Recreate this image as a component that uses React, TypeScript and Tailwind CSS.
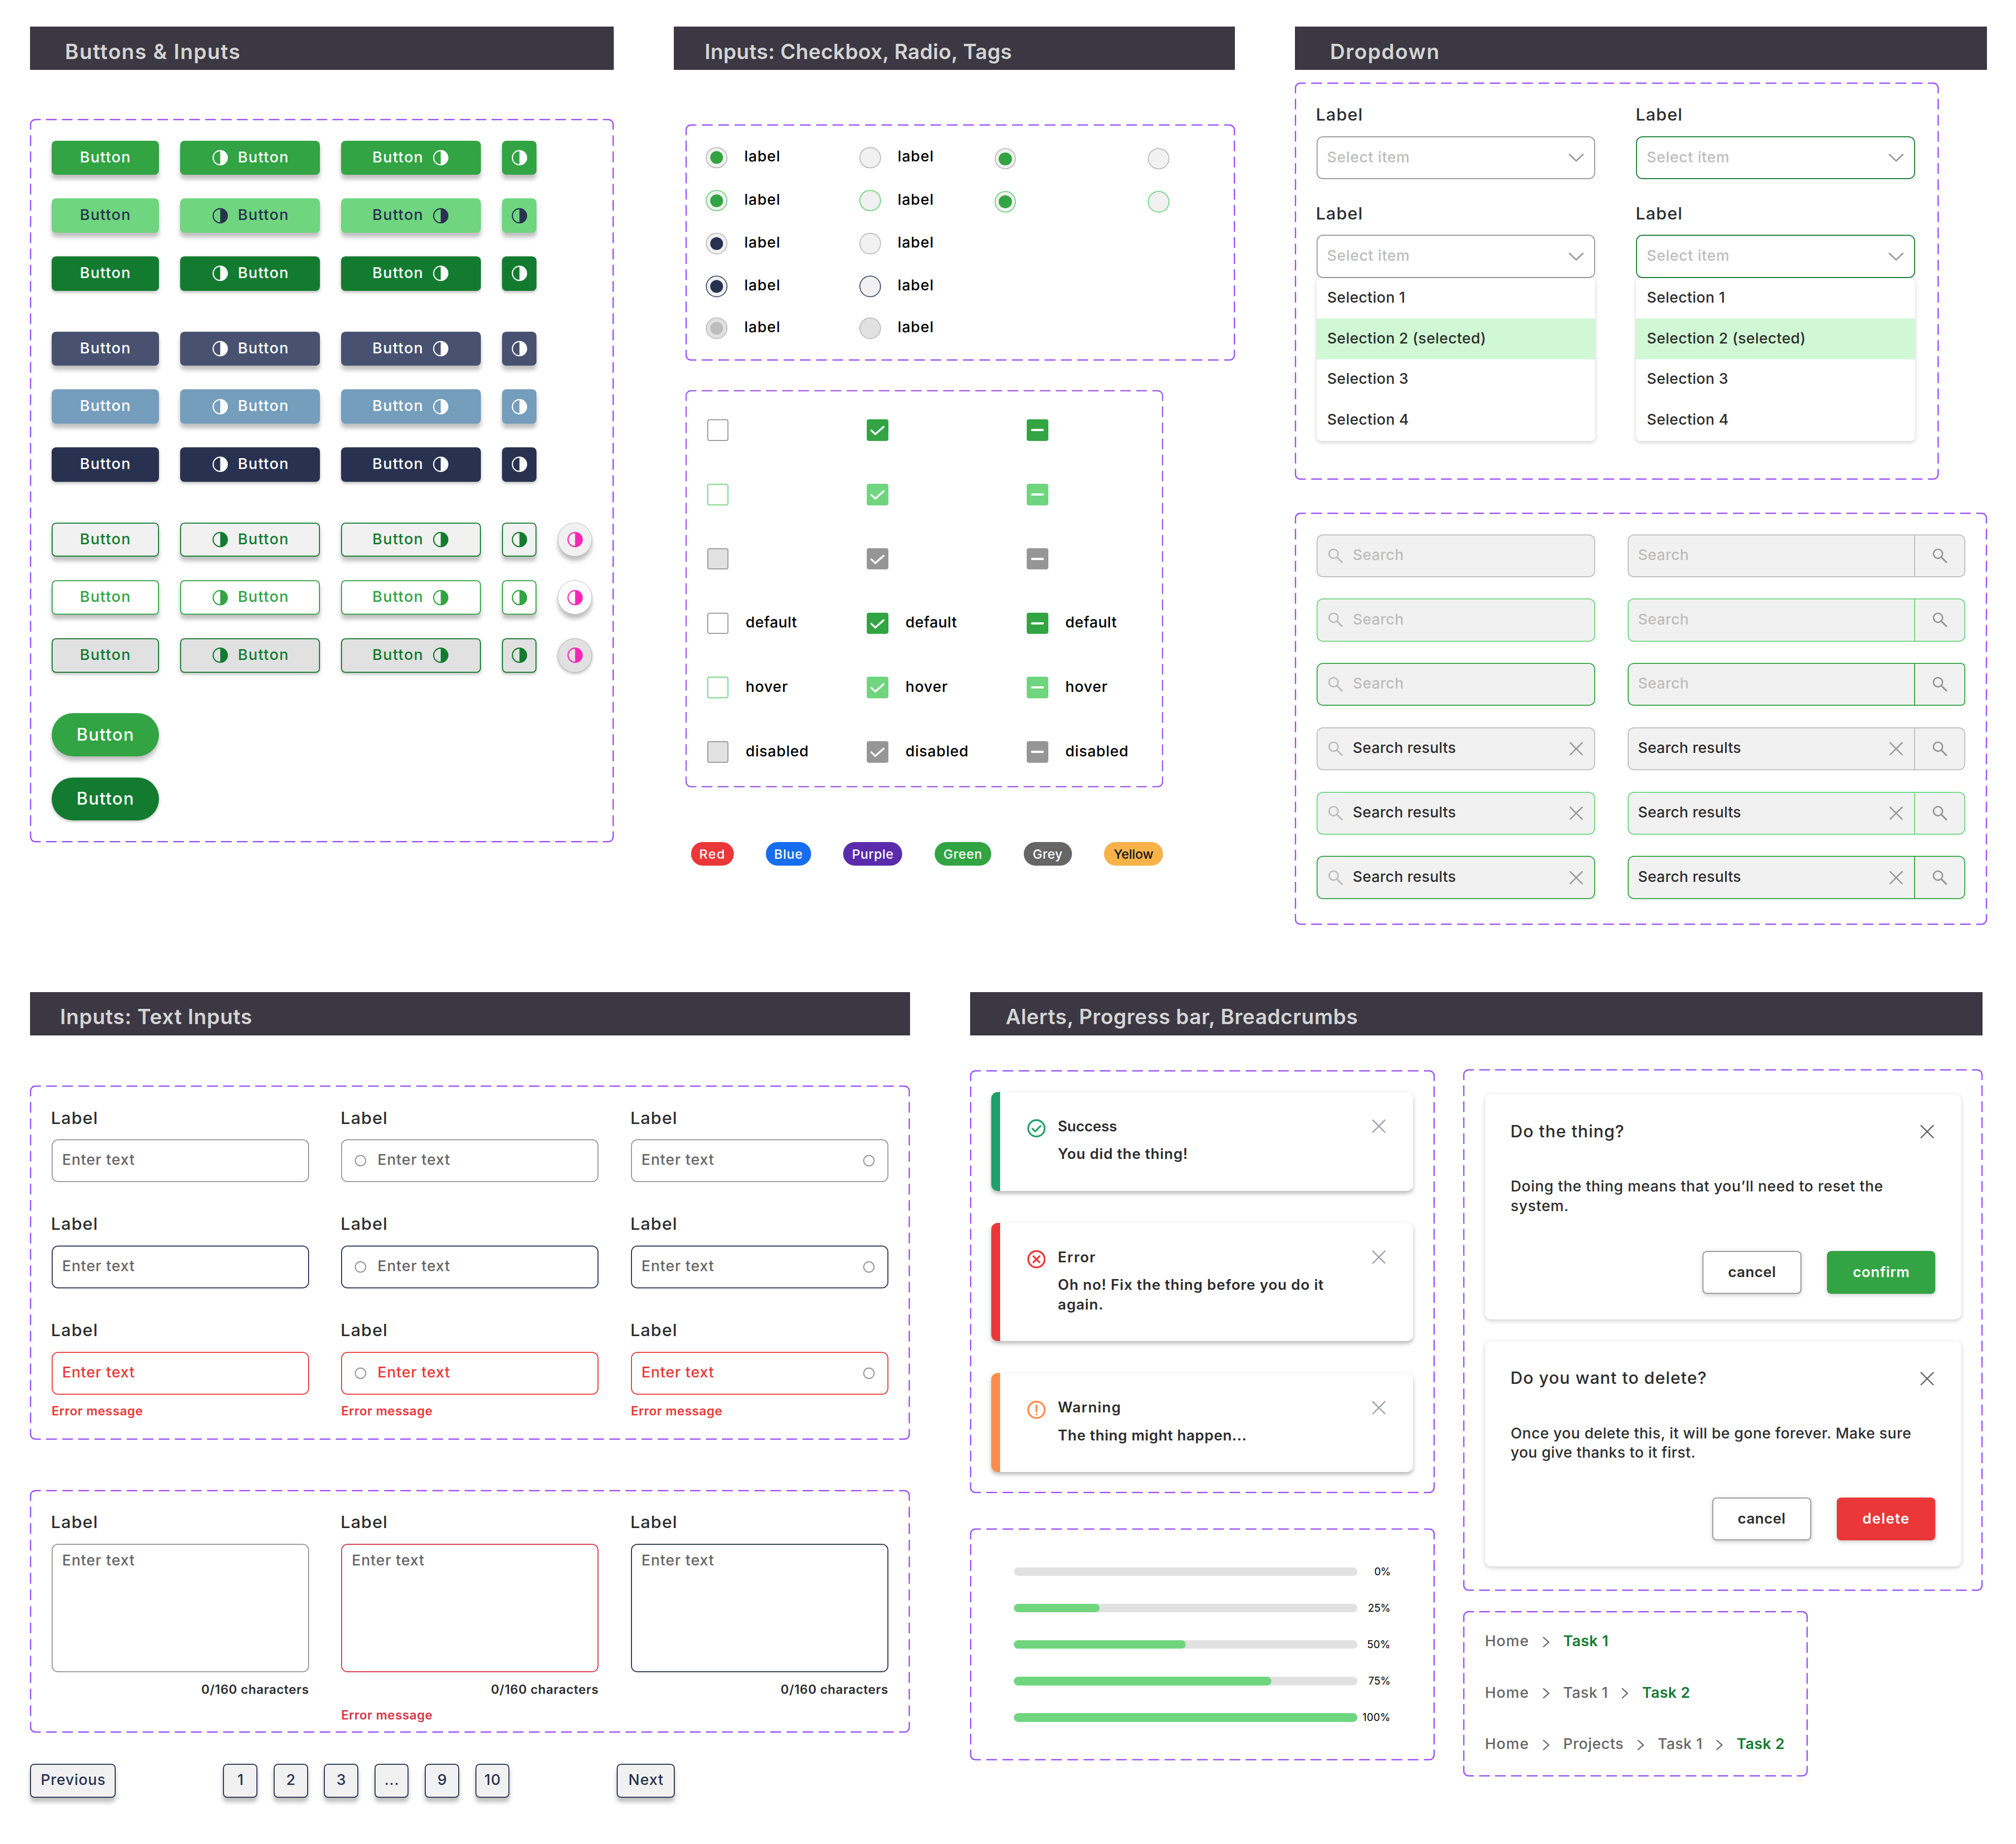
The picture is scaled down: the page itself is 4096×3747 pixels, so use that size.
import React from "react";

type Kids = { children?: React.ReactNode };

/* ---------- dashed component frame ---------- */

const R = 4.5;
const K = 0.5 + R * (1 - Math.SQRT1_2);
const CORNER = (R * Math.PI) / 4 + 5;

function dash(side: number) {
  const length = side - 10 + (R * Math.PI) / 2;
  const inner = length - 2 * CORNER;
  const n = Math.round((inner - 5) / 15);
  const gap = (inner - 10 * n) / (n + 1);
  return { strokeDasharray: `10 ${gap}`, strokeDashoffset: 10 - CORNER };
}

function Frame({ w, h, size, className = "", stroke = "#9747ff", children }: Kids & { w: number; h: number; size: string; className?: string; stroke?: string }) {
  const r = w - K;
  const b = h - K;
  const arc = (x: number, y: number) => `A${R} ${R} 0 0 1 ${x} ${y}`;
  return (
    <div className={`relative shrink-0 ${size} ${className}`}>
      <svg className="pointer-events-none absolute inset-0 overflow-visible" width={w} height={h} fill="none" stroke={stroke} strokeWidth="1.15">
        <path d={`M${K} ${K}${arc(5, 0.5)}H${w - 5}${arc(r, K)}`} {...dash(w)} />
        <path d={`M${r} ${K}${arc(w - 0.5, 5)}V${h - 5}${arc(r, b)}`} {...dash(h)} />
        <path d={`M${r} ${b}${arc(w - 5, h - 0.5)}H5${arc(K, b)}`} {...dash(w)} />
        <path d={`M${K} ${b}${arc(0.5, h - 5)}V5${arc(K, K)}`} {...dash(h)} />
      </svg>
      {children}
    </div>
  );
}

function Header({ children, className = "" }: Kids & { className?: string }) {
  return (
    <h2 className={`flex h-10 shrink-0 items-center bg-[#3b3843] pt-[6.4px] text-[19.25px] font-[580] whitespace-nowrap text-[#d4d4d4] ${className}`}>
      {children}
    </h2>
  );
}

/* ---------- icons ---------- */

const svg = "block size-4 shrink-0";

const Contrast = () => (
  <svg className={svg} viewBox="0 0 16 16">
    <circle cx="8" cy="8" r="6.6" fill="none" stroke="currentColor" strokeWidth="1.1" />
    <path d="M8 1.4a6.6 6.6 0 0 1 0 13.2z" fill="currentColor" />
  </svg>
);
const Close = ({ className = "" }: { className?: string }) => (
  <svg className={`${svg} ${className}`} viewBox="0 0 16 16" fill="none" stroke="currentColor" strokeWidth="1.25" strokeLinecap="round">
    <path d="M2.4 2.4l11.2 11.2M13.6 2.4L2.4 13.6" />
  </svg>
);
const Down = () => (
  <svg className={`${svg} text-[#969696]`} viewBox="0 0 16 16" fill="none" stroke="currentColor" strokeWidth="1.3" strokeLinecap="round" strokeLinejoin="round">
    <path d="M1.7 5L8 11L14.3 5" />
  </svg>
);
const Right = () => (
  <svg className={`${svg} text-[#666666]`} viewBox="0 0 16 16" fill="none" stroke="currentColor" strokeWidth="1.1" strokeLinecap="round" strokeLinejoin="round">
    <path d="M5.6 4.3L10.4 8.6L5.6 12.9" />
  </svg>
);
const Magnifier = ({ className = "" }: { className?: string }) => (
  <svg className={`${svg} ${className}`} viewBox="0 0 16 16" fill="none" stroke="currentColor" strokeWidth="1.35">
    <circle cx="6.2" cy="6.1" r="4.2" />
    <path d="M9.3 9.3L14 14" strokeWidth="1.5" strokeLinecap="round" />
  </svg>
);
const Ring = () => (
  <svg className={`${svg} text-[#969696]`} viewBox="0 0 16 16" fill="none" stroke="currentColor" strokeWidth="1">
    <circle cx="8" cy="8" r="4.85" />
  </svg>
);
const status = {
  success: <path d="M6.3 10.3l2.5 2.5 5-5" />,
  error: <path d="M7.2 7.2l5.6 5.6M12.8 7.2l-5.6 5.6" />,
  warning: <path d="M10 5.7v6M10 14.3v.01" />,
};

/* ---------- buttons ---------- */

const lift = "shadow-[0_4px_4px_rgba(0,0,0,0.25)]";
const press = "shadow-[0_1px_3px_rgba(0,0,0,0.28)]";

const buttonGroups: string[][] = [
  [
    `bg-[#32a443] text-white ${lift}`,
    `bg-[#6fd57f] text-[#283250] ${lift}`,
    `bg-[#137b30] text-white ${press}`,
  ],
  [
    `bg-[#485270] text-white ${lift}`,
    `bg-[#759dbc] text-white ${lift}`,
    `bg-[#283250] text-white ${press}`,
  ],
  [
    `border border-[#137b30] bg-[#f1f1f1] text-[#137b30] ${lift}`,
    `border border-[#32a443] bg-white text-[#32a443] ${lift}`,
    `border border-[#137b30] bg-[#e1e1e1] text-[#137b30] ${press}`,
  ],
];
const rounds = [`bg-[#f1f1f1] ${lift}`, `bg-white ${lift}`, `bg-[#e1e1e1] ${press}`];

const ButtonText = () => <span className="-mr-[0.7px] pb-[1.6px] text-[14px] font-[450] tracking-[0.72px]">Button</span>;
const btn = "flex h-8 items-center justify-center rounded-[4px]";

function ButtonsSection() {
  return (
    <section className="w-[544px]">
      <Header className="pl-[32.6px] tracking-[0.75px]">Buttons &amp; Inputs</Header>
      <Frame w={544} h={674} size="h-[674px] w-[544px]" className="mt-[46px] flex flex-col gap-[38px] p-5">
        {buttonGroups.map((group, g) => (
          <div key={g} className="flex flex-col gap-[22px]">
            {group.map((tone, i) => (
              <div key={i} className="flex gap-5">
                <button className={`${btn} w-[100px] ${tone}`}><ButtonText /></button>
                <button className={`${btn} w-[130px] gap-[8.5px] ${tone}`}><Contrast /><ButtonText /></button>
                <button className={`${btn} w-[130px] gap-[8.7px] ${tone}`}><ButtonText /><Contrast /></button>
                <button className={`${btn} w-8 ${tone}`}><Contrast /></button>
                {g === 2 && (
                  <button className={`flex size-8 items-center justify-center rounded-full border-[0.5px] border-[#b5b5b5] text-[#f726b4] ${rounds[i]}`}>
                    <Contrast />
                  </button>
                )}
              </div>
            ))}
          </div>
        ))}
        <div className="flex flex-col gap-5">
          {[`bg-[#32a443] ${lift}`, `bg-[#137b30] ${press}`].map((tone) => (
            <button key={tone} className={`flex h-10 w-[100px] items-center justify-center rounded-full pb-[1.3px] pl-[0.7px] text-[16px] font-[450] tracking-[0.74px] text-white ${tone}`}>
              Button
            </button>
          ))}
        </div>
      </Frame>
    </section>
  );
}

/* ---------- radios, checkboxes, tags ---------- */

function Radio({ ring, fill = "bg-[#f1f1f1]", dot, text }: { ring: string; fill?: string; dot?: string; text?: boolean }) {
  return (
    <div className="flex h-5 items-center gap-[15.7px]">
      <span className={`flex size-5 items-center justify-center rounded-full border ${ring} ${fill}`}>
        {dot && <span className={`size-3 rounded-full ${dot}`} />}
      </span>
      {text && <span className="pb-[2px] text-[13.8px] leading-5 font-[450] tracking-[0.48px]">label</span>}
    </div>
  );
}

const radioRows = [
  { ring: "border-[#bdbdbd]", dot: "bg-[#32a443]", extra: true },
  { ring: "border-[#6fd57f]", dot: "bg-[#32a443]", extra: true },
  { ring: "border-[#bdbdbd]", dot: "bg-[#283250]" },
  { ring: "border-[#485270]", dot: "bg-[#283250]" },
  { ring: "border-[#bdbdbd]", dot: "bg-[#bdbdbd]", fill: "bg-[#e1e1e1]" },
];

const boxTones = [
  { empty: "border-[#969696] bg-white", full: "bg-[#32a443]" },
  { empty: "border-[#6fd57f] bg-white", full: "bg-[#6fd57f]" },
  { empty: "border-[#969696] bg-[#e1e1e1]", full: "bg-[#969696]" },
];
const boxRows = [
  ...boxTones.map((t) => ({ ...t, text: "", track: "" })),
  { ...boxTones[0], text: "default", track: "tracking-[0.27px]" },
  { ...boxTones[1], text: "hover", track: "tracking-[0.42px]" },
  { ...boxTones[2], text: "disabled", track: "tracking-[0.38px]" },
];

function Check({ tone, kind, text, track }: { tone: string; kind: number; text: string; track: string }) {
  return (
    <div className="flex h-5 items-center gap-4">
      <span className={`size-5 rounded-[2px] ${kind === 0 ? "border" : ""} ${tone}`}>
        {kind > 0 && (
          <svg className="block size-5" viewBox="0 0 20 20" fill="none" stroke="white" strokeLinecap="round" strokeLinejoin="round">
            {kind === 1 ? <path d="M4.3 10.3L7.9 13.9L15.7 7" strokeWidth="1.7" /> : <path d="M5 10h10" strokeWidth="2" />}
          </svg>
        )}
      </span>
      <span className={`pb-[1.5px] text-[13.8px] leading-5 font-[450] ${track}`}>{text}</span>
    </div>
  );
}

const tags: [string, string][] = [
  ["Red", "w-10 bg-[#eb3738] text-white tracking-[0.8px]"],
  ["Blue", "w-[42px] bg-[#176df0] text-white tracking-[0.43px]"],
  ["Purple", "w-[55px] bg-[#5a2cab] text-white tracking-[0.28px]"],
  ["Green", "w-[53px] bg-[#32a443] text-white tracking-[0.33px]"],
  ["Grey", "w-[45px] bg-[#666666] text-white tracking-[0.2px]"],
  ["Yellow", "w-[55px] bg-[#f8b24a] text-[#10141c] tracking-[-0.08px]"],
];

function ChoicesSection() {
  return (
    <section className="w-[523px]">
      <Header className="pl-[28.8px] tracking-[0.18px]">Inputs: Checkbox, Radio, Tags</Header>
      <Frame w={512} h={220} size="h-[220px] w-[512px]" className="mt-[51px] ml-[11px] flex flex-col gap-5 pt-[21px] pl-[19px]">
        {radioRows.map(({ extra, dot, ...row }, i) => (
          <div key={i} className={i === 4 ? "-mt-px grid grid-cols-[143px_126px_143px_20px]" : "grid grid-cols-[143px_126px_143px_20px]"}>
            <Radio {...row} dot={dot} text />
            <Radio {...row} text />
            {extra && <div className="-mb-px pt-px"><Radio {...row} dot={dot} /></div>}
            {extra && <div className="-mb-px pt-px"><Radio {...row} /></div>}
          </div>
        ))}
      </Frame>
      <Frame w={445} h={370} size="h-[370px] w-[445px]" stroke="#9a57e9" className="mt-7 ml-[11px] flex flex-col gap-10 pt-[27px] pl-5">
        {boxRows.map((row, i) => (
          <div key={i} className="grid grid-cols-[149px_149px_100px]">
            <Check kind={0} tone={row.empty} text={row.text} track={row.track} />
            <Check kind={1} tone={row.full} text={row.text} track={row.track} />
            <Check kind={2} tone={row.full} text={row.text} track={row.track} />
          </div>
        ))}
      </Frame>
      <div className="mt-[51px] ml-4 flex gap-[30px]">
        {tags.map(([name, style]) => (
          <span key={name} className={`flex h-[22px] items-center justify-center rounded-full text-[12px] font-[470] ${style}`}>{name}</span>
        ))}
      </div>
    </section>
  );
}

/* ---------- dropdowns and search ---------- */

const FieldLabel = () => (
  <div className="-ml-[0.5px] h-5 text-[15.9px] leading-5 font-[450] tracking-[0.55px] text-[#2d2d2d]">Label</div>
);

function Select({ tone, open }: { tone: string; open?: boolean }) {
  return (
    <div className="w-[260px]">
      <FieldLabel />
      <div className={`mt-[10px] flex h-10 items-center justify-between rounded-[6px] border bg-white px-[9px] ${tone}`}>
        <span className="pb-px text-[13.8px] font-[450] tracking-[0.35px] text-[#bdbdbd]">Select item</span>
        <Down />
      </div>
      {open && (
        <ul className="rounded-[4px] bg-white text-[13.8px] font-[450] tracking-[0.2px] text-[#2d2d2d] shadow-[0_1px_4px_rgba(0,0,0,0.18)]">
          {["Selection 1", "Selection 2 (selected)", "Selection 3", "Selection 4"].map((item, i) => (
            <li key={item} className={`flex h-[38px] items-center pb-[1.5px] pl-[10px] ${i === 1 ? "bg-[#d0f8d5]" : ""}`}>{item}</li>
          ))}
        </ul>
      )}
    </div>
  );
}

const searchRows = [
  { tone: "border-[#bdbdbd]", full: false },
  { tone: "border-[#6fd57f]", full: false },
  { tone: "border-[#32a443]", full: false },
  { tone: "border-[#bdbdbd]", full: true },
  { tone: "border-[#6fd57f]", full: true },
  { tone: "border-[#32a443]", full: true },
];

const SearchText = ({ full }: { full: boolean }) => (
  <span className={`flex-1 pb-[1.6px] text-[13.8px] font-[450] ${full ? "tracking-[0.11px] text-[#2d2d2d]" : "tracking-[0.2px] text-[#bdbdbd]"}`}>
    {full ? "Search results" : "Search"}
  </span>
);

function DropdownSection() {
  return (
    <section className="w-[645px]">
      <Header className="pl-[32.6px] tracking-[0.8px]">Dropdown</Header>
      <Frame w={600} h={370} size="h-[370px] w-[600px]" className="mt-3 flex flex-col gap-[22px] p-5">
        {[false, true].map((open) => (
          <div key={String(open)} className="flex gap-[38px]">
            <Select tone="border-[#969696]" open={open} />
            <Select tone="border-[#137b30]" open={open} />
          </div>
        ))}
      </Frame>
      <Frame w={645} h={384} size="h-[384px] w-[645px]" className="mt-[31px] flex flex-col gap-5 p-5">
        {searchRows.map(({ tone, full }, i) => (
          <div key={i} className="flex h-10 gap-[30px]">
            <div className={`flex w-[260px] items-center gap-2 rounded-[6px] border bg-[#f1f1f1] px-[9px] ${tone}`}>
              <Magnifier className="text-[#bdbdbd]" />
              <SearchText full={full} />
              {full && <Close className="text-[#969696]" />}
            </div>
            <div className="flex">
              <div className={`flex w-[268px] items-center rounded-l-[6px] border bg-[#f1f1f1] pr-[9px] pl-[8.8px] ${tone}`}>
                <SearchText full={full} />
                {full && <Close className="text-[#969696]" />}
              </div>
              <div className={`flex w-[47px] items-center justify-center border border-l-0 bg-[#f1f1f1] ${i === 2 ? "rounded-r-[4px]" : "rounded-r-[6px]"} ${tone}`}>
                <Magnifier className="text-[#969696]" />
              </div>
            </div>
          </div>
        ))}
      </Frame>
    </section>
  );
}

/* ---------- text inputs ---------- */

const fieldTones = [
  { border: "border-[#969696]", text: "text-[#666666]", error: false },
  { border: "border-[#283250]", text: "text-[#666666]", error: false },
  { border: "border-[#eb3738]", text: "text-[#eb3738]", error: true },
];
const areas = [
  { border: "border-[#969696]", error: false },
  { border: "border-[#d63649]", error: true },
  { border: "border-[#283250]", error: false },
];
const pager = "flex h-8 items-center justify-center rounded-[4px] border border-[#283250] bg-[#f1f1f1] pb-[1.5px] text-[13.8px] font-[450] text-[#283250] shadow-[0_4px_4px_rgba(0,0,0,0.25)]";

function TextInputsSection() {
  return (
    <section className="w-[820px]">
      <Header className="pl-[28px] tracking-[0.37px]">Inputs: Text Inputs</Header>
      <Frame w={820} h={330} size="h-[330px] w-[820px]" className="mt-[47px] flex flex-col gap-[29px] p-5">
        {fieldTones.map((t, i) => (
          <div key={i} className="flex gap-[30px]">
            {[0, 1, 2].map((kind) => (
              <div key={kind} className="w-60">
                <FieldLabel />
                <div className={`mt-[10px] flex h-10 items-center gap-2 rounded-[6px] border px-[9px] ${t.border}`}>
                  {kind === 1 && <Ring />}
                  <span className={`flex-1 pb-[1.8px] text-[13.8px] font-[450] tracking-[0.46px] ${t.text}`}>Enter text</span>
                  {kind === 2 && <Ring />}
                </div>
                {t.error && <p className="mt-[8.5px] text-[11.6px] leading-[14px] font-[580] tracking-[0.3px] text-[#eb3738]">Error message</p>}
              </div>
            ))}
          </div>
        ))}
      </Frame>
      <Frame w={820} h={226} size="h-[226px] w-[820px]" className="mt-[47px] flex gap-[30px] p-5">
        {areas.map((a) => (
          <div key={a.border} className="w-60">
            <FieldLabel />
            <div className={`mt-[10px] h-[120px] rounded-[6px] border pt-[4.8px] pl-[9px] text-[13.8px] leading-5 font-[450] tracking-[0.46px] text-[#666666] ${a.border}`}>
              Enter text
            </div>
            <p className="mt-[9px] text-right text-[11.6px] leading-[14px] font-[580] tracking-[0.33px] text-[#2d2d2d]">0/160 characters</p>
            {a.error && <p className="mt-[10px] text-[11.6px] leading-[14px] font-[580] tracking-[0.3px] text-[#d63649]">Error message</p>}
          </div>
        ))}
      </Frame>
      <nav className="mt-[29px] flex gap-[100px]">
        <button className={`${pager} w-20 pl-[0.6px] tracking-[0.42px]`}>Previous</button>
        <div className="flex gap-[15px]">
          {["1", "2", "3", "...", "9", "10"].map((p) => (
            <button key={p} className={`${pager} w-8 pl-[0.6px] tracking-[0.5px]`}>{p}</button>
          ))}
        </div>
        <button className={`${pager} w-[54px] pl-[0.6px] tracking-[0.53px]`}>Next</button>
      </nav>
    </section>
  );
}

/* ---------- alerts, progress, dialogs, breadcrumbs ---------- */

const alerts = [
  { kind: "success" as const, h: "h-[92px]", bar: "bg-[#22a06b]", ink: "text-[#22a06b]", title: "Success", tt: "tracking-[-0.05px]", body: "You did the thing!", bt: "tracking-[0.41px]" },
  { kind: "error" as const, h: "h-[110px]", bar: "bg-[#eb3738]", ink: "text-[#eb3738]", title: "Error", tt: "tracking-[0.66px]", body: "Oh no! Fix the thing before you do it again.", bt: "tracking-[0.44px]" },
  { kind: "warning" as const, h: "h-[92px]", bar: "bg-[#fd8c4e]", ink: "text-[#fd8c4e]", title: "Warning", tt: "tracking-[0.63px]", body: "The thing might happen...", bt: "tracking-[0.34px]" },
];

const bars = [
  { label: "0%", fill: "w-0", track: "tracking-[-0.3px]" },
  { label: "25%", fill: "w-1/4", track: "tracking-[-0.1px]" },
  { label: "50%", fill: "w-1/2", track: "tracking-[0.1px]" },
  { label: "75%", fill: "w-3/4", track: "tracking-[-0.05px]" },
  { label: "100%", fill: "w-full", track: "tracking-[0.12px]" },
];

const dialogs = [
  {
    title: "Do the thing?",
    lines: [
      ["Doing the thing means that you’ll need to reset the", "tracking-[0.31px]"],
      ["system.", "tracking-[0.35px]"],
    ],
    action: "confirm",
    tone: "w-[101px] bg-[#32a443] tracking-[0.33px]",
  },
  {
    title: "Do you want to delete?",
    lines: [
      ["Once you delete this, it will be gone forever. Make sure", "tracking-[0.24px]"],
      ["you give thanks to it first.", "tracking-[0.22px]"],
    ],
    action: "delete",
    tone: "w-[92px] bg-[#eb3738] tracking-[0.61px]",
  },
];

const crumbTrack: Record<string, string> = {
  Home: "tracking-[0.6px]",
  Projects: "tracking-[0.33px]",
  "Task 1": "tracking-[0.26px]",
  "Task 2": "tracking-[0.24px]",
};
const trails = [["Home", "Task 1"], ["Home", "Task 1", "Task 2"], ["Home", "Projects", "Task 1", "Task 2"]];

function FeedbackSection() {
  const dialogButton = "flex h-10 items-center justify-center rounded-[4px] pb-[1.4px] text-[13.5px] font-semibold shadow-[0_1px_4px_rgba(0,0,0,0.2)]";
  return (
    <section className="w-[944px]">
      <Header className="pl-[33.3px] tracking-[0.27px]">Alerts, Progress bar, Breadcrumbs</Header>
      <div className="flex gap-[27px]">
        <div className="pt-[33px]">
          <Frame w={433} h={394} size="h-[394px] w-[433px]" className="flex flex-col gap-[30px] p-5">
            {alerts.map((a) => (
              <div key={a.kind} className={`flex w-[393px] overflow-hidden rounded-[6px] bg-white shadow-[0_2px_4px_rgba(0,0,0,0.28)] ${a.h}`}>
                <div className={`w-2 ${a.bar}`} />
                <div className="flex flex-1 gap-[10px] pt-6 pr-6 pl-6">
                  <svg className={`block size-5 shrink-0 ${a.ink}`} viewBox="0 0 20 20" fill="none" stroke="currentColor" strokeWidth="1.65" strokeLinecap="round" strokeLinejoin="round">
                    <circle cx="10" cy="10" r="7.65" />
                    {status[a.kind]}
                  </svg>
                  <div className="-mt-[1.2px] flex-1 text-[13.5px] leading-[18px] font-[580] text-[#2d2d2d]">
                    <h3 className={a.tt}>{a.title}</h3>
                    <p className={`mt-2 w-[262px] ${a.bt}`}>{a.body}</p>
                  </div>
                  <Close className="text-[#9aa5b1]" />
                </div>
              </div>
            ))}
          </Frame>
          <Frame w={433} h={216} size="h-[216px] w-[433px]" className="mt-[33px] flex flex-col gap-[26px] pt-9 pl-[41px]">
            {bars.map((b) => (
              <div key={b.label} className="flex h-2 w-[351px] items-center justify-between">
                <div className="h-2 w-80 shrink-0 rounded-full bg-[#e1e1e1]">
                  <div className={`h-2 rounded-full bg-[#6fd57f] ${b.fill}`} />
                </div>
                <span className={`-ml-2 text-[9.7px] leading-2 ${b.track}`}>{b.label}</span>
              </div>
            ))}
          </Frame>
        </div>
        <div className="pt-8">
          <Frame w={484} h={486} size="h-[486px] w-[484px]" className="flex flex-col gap-5 px-5 pt-[23px]">
            {dialogs.map((d) => (
              <div key={d.title} className="flex h-[210px] w-[444px] flex-col rounded-[6px] bg-white p-6 text-[#2d2d2d] shadow-[0_1px_4px_rgba(0,0,0,0.2)]">
                <div className="flex h-[22px] items-center justify-between">
                  <h3 className="-ml-[0.2px] pb-[0.6px] text-[15.7px] leading-[22px] font-[450] tracking-[0.54px]">{d.title}</h3>
                  <Close className="text-[#666666]" />
                </div>
                <p className="mt-[31px] text-[13.8px] leading-[18px] font-[450] whitespace-nowrap">
                  {d.lines.map(([line, track]) => (
                    <span key={line} className={`block ${track}`}>{line}</span>
                  ))}
                </p>
                <div className="mt-auto flex justify-end gap-6">
                  <button className={`${dialogButton} w-[92px] border border-[#969696] bg-white tracking-[0.23px]`}>cancel</button>
                  <button className={`${dialogButton} text-white ${d.tone}`}>{d.action}</button>
                </div>
              </div>
            ))}
          </Frame>
          <Frame w={321} h={154} size="h-[154px] w-[321px]" className="mt-[19px] flex flex-col gap-[30px] pt-[19px] pl-5">
            {trails.map((trail, i) => (
              <div key={i} className="flex h-[18px] items-center gap-[7.8px] text-[13.8px] leading-[18px]">
                {trail.map((name, n) => {
                  const last = n === trail.length - 1;
                  return (
                    <React.Fragment key={name}>
                      {n > 0 && <Right />}
                      <span className={`pb-[0.4px] ${last ? "font-[560] text-[#137b30]" : "font-[450] text-[#666666]"} ${crumbTrack[name]}`}>{name}</span>
                    </React.Fragment>
                  );
                })}
              </div>
            ))}
          </Frame>
        </div>
      </div>
    </section>
  );
}

export default function App() {
  return (
    <main className="h-[1718.8px] w-[1879px] overflow-hidden bg-white pt-[25px] pl-7 [font-family:Inter,sans-serif] text-black [zoom:2.17988]">
      <div className="flex h-[900px] gap-14">
        <ButtonsSection />
        <ChoicesSection />
        <DropdownSection />
      </div>
      <div className="flex gap-14">
        <TextInputsSection />
        <FeedbackSection />
      </div>
    </main>
  );
}
